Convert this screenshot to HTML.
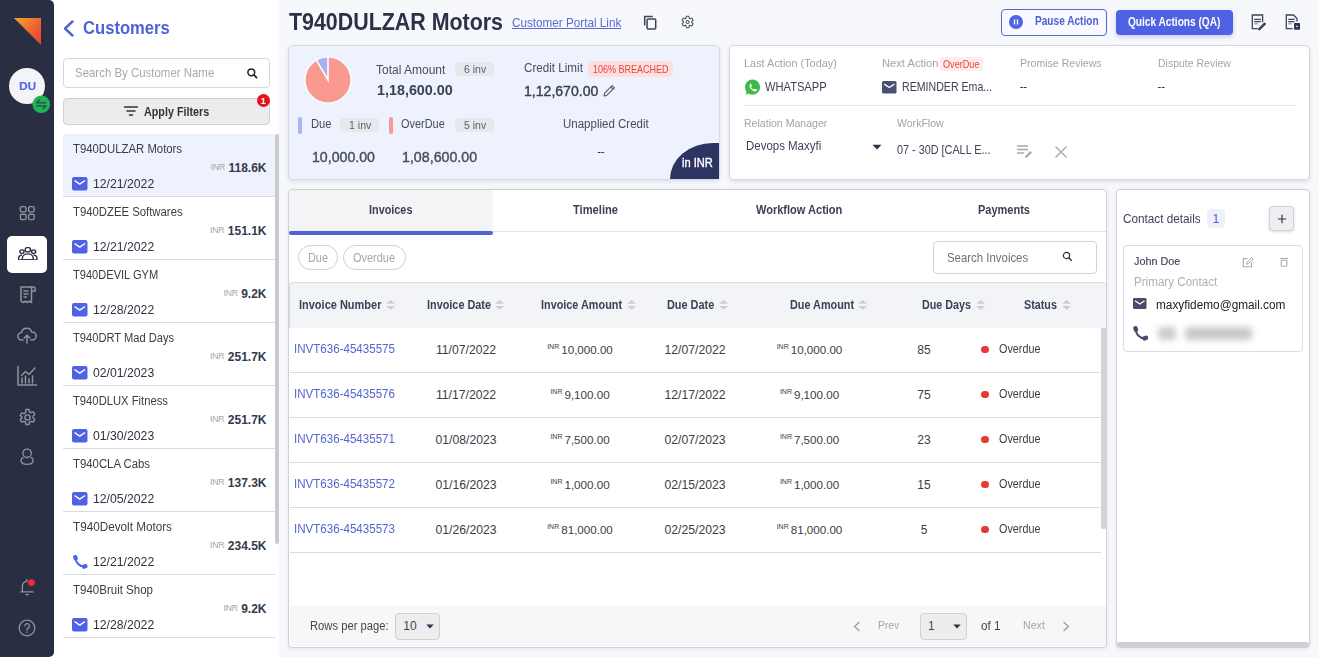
<!DOCTYPE html>
<html><head><meta charset="utf-8"><style>
html,body{margin:0;padding:0;}
body{width:1319px;height:657px;position:relative;overflow:hidden;background:#f7f8fb;font-family:"Liberation Sans", sans-serif;}
</style></head><body>
<div style="position:absolute;left:0px;top:0px;width:279px;height:657px;background:#ffffff;"></div><div style="position:absolute;left:0px;top:0px;width:54px;height:657px;background:#2a2e42;border-radius:0 5px 5px 0;"></div><svg style="position:absolute;left:0px;top:0px;" width="54" height="60" viewBox="0 0 54 60"><defs><linearGradient id="lg" x1="0" y1="0" x2="1" y2="0.8"><stop offset="0" stop-color="#f9a81f"/><stop offset="0.55" stop-color="#ef6a35"/><stop offset="1" stop-color="#e8462e"/></linearGradient></defs><polygon points="14,18 41,18 41,45" fill="url(#lg)"/></svg><div style="position:absolute;left:9px;top:68px;width:36px;height:36px;background:#f3f4f8;border-radius:50%;"></div><div style="position:absolute;left:-272.60px;width:600px;text-align:center;top:81.20px;font-size:11.8px;line-height:11.8px;font-weight:700;color:#4f62e3;white-space:nowrap;">DU</div><svg style="position:absolute;left:32px;top:95px;" width="19" height="19" viewBox="0 0 19 19"><circle cx="9.3" cy="9.2" r="8.8" fill="#1db455"/><path d="M14 7.8H4.6l3-2.9M4.6 10.8H14l-3 2.9" stroke="#34413f" stroke-width="1.2" fill="none" stroke-linecap="round" stroke-linejoin="round"/></svg><svg style="position:absolute;left:19px;top:205px;" width="18" height="17" viewBox="0 0 18 17"><g fill="none" stroke="#9092a0" stroke-width="1.4"><rect x="1.4" y="1.6" width="5.6" height="5.3" rx="1.4"/><rect x="9.6" y="1.6" width="5.6" height="5.3" rx="1.4"/><rect x="1.4" y="9.3" width="5.6" height="5.3" rx="1.4"/><rect x="9.6" y="9.3" width="5.6" height="5.3" rx="1.4"/></g></svg><div style="position:absolute;left:7px;top:236px;width:40px;height:37px;background:#ffffff;border-radius:5px;"></div><svg style="position:absolute;left:18.2px;top:246.8px" width="19.6" height="13.4" viewBox="0.4 1 19.2 15" preserveAspectRatio="none"><g fill="none" stroke="#2b2f45" stroke-width="1.4"><circle cx="10" cy="4" r="2.6"/><path d="M4.6 15.5v-1.5c0-3 2.4-5.2 5.4-5.2s5.4 2.2 5.4 5.2v1.5z"/><circle cx="4.3" cy="6.3" r="2"/><path d="M1 15.5v-1.6c0-2.2 1.3-3.8 3.4-3.8"/><circle cx="15.7" cy="6.3" r="2"/><path d="M19 15.5v-1.6c0-2.2-1.3-3.8-3.4-3.8"/><path d="M1 15.5h18"/></g></svg><svg style="position:absolute;left:18px;top:285px;" width="19" height="20" viewBox="0 0 19 20"><g fill="none" stroke="#9092a0" stroke-width="1.5" stroke-linejoin="round"><path d="M3 2h10.5v15.5l-2-1.3-2 1.3-2-1.3-2 1.3-2.5-1.3z"/><path d="M13.5 2h2a1.6 1.6 0 0 1 1.6 1.6V6h-3.6"/><path d="M5.5 6h5M5.5 9h5M5.5 12h3.5"/></g></svg><svg style="position:absolute;left:17px;top:327px;" width="20" height="17" viewBox="0 0 20 17"><g fill="none" stroke="#9092a0" stroke-width="1.5" stroke-linecap="round" stroke-linejoin="round"><path d="M6 13H4.8A3.8 3.8 0 0 1 4.6 5.4 5.2 5.2 0 0 1 14.7 5 3.9 3.9 0 0 1 15.5 13H14"/><path d="M10 16V8.5M7.2 11l2.8-2.8 2.8 2.8"/></g></svg><svg style="position:absolute;left:16px;top:365px;" width="22" height="22" viewBox="0 0 22 22"><g fill="none" stroke="#9092a0" stroke-width="1.5" stroke-linecap="round" stroke-linejoin="round"><path d="M2 1.5v18.5h18.5"/><path d="M6 18v-5M9.5 18v-7M13 18v-4M16.5 18v-7"/><path d="M5.5 10.5l4-4 3.5 3 6-6.5"/></g></svg><svg style="position:absolute;left:18px;top:408px;" width="19" height="19" viewBox="0 0 19 19"><g fill="none" stroke="#9092a0" stroke-width="1.4" stroke-linejoin="round"><path d="M8 1.5h3l.5 2.3 1.6.9 2.2-.8 1.5 2.6-1.7 1.6v1.8l1.7 1.6-1.5 2.6-2.2-.8-1.6.9-.5 2.3H8l-.5-2.3-1.6-.9-2.2.8-1.5-2.6 1.7-1.6V9.1L2.2 7.5l1.5-2.6 2.2.8 1.6-.9z"/><circle cx="9.5" cy="9.5" r="2.6"/></g></svg><svg style="position:absolute;left:18px;top:447px;" width="18" height="20" viewBox="0 0 18 20"><g fill="none" stroke="#9092a0" stroke-width="1.35"><circle cx="9.1" cy="6.3" r="4.2"/><path d="M5.4 10.3C2.2 11.6 1.4 17.3 9.1 17.3S16 11.6 12.8 10.3"/></g></svg><svg style="position:absolute;left:19px;top:576px;" width="17" height="22" viewBox="0 0 17 22"><g fill="none" stroke="#9092a0" stroke-width="1.3" stroke-linecap="round"><path d="M3.4 15.6V10.5a5 5 0 0 1 4.4-5.2V3.6"/><path d="M1.8 15.9h12.4"/><path d="M6.8 18.6h2.6"/></g><circle cx="12.4" cy="6.6" r="3.4" fill="#f02d2d"/></svg><svg style="position:absolute;left:18px;top:619px;" width="18" height="18" viewBox="0 0 18 18"><circle cx="9" cy="9" r="7.8" fill="none" stroke="#9092a0" stroke-width="1.3"/><path d="M6.8 7a2.3 2.3 0 1 1 3.2 2.1c-.7.4-1 .8-1 1.6v.5" fill="none" stroke="#9092a0" stroke-width="1.3" stroke-linecap="round"/><circle cx="9" cy="13.3" r=".8" fill="#9092a0"/></svg><svg style="position:absolute;left:61px;top:19px;" width="15" height="19" viewBox="0 0 15 19"><path d="M11.5 2.5L4 9.5l7.5 7" fill="none" stroke="#4f63d9" stroke-width="2.4" stroke-linecap="round" stroke-linejoin="round"/></svg><div style="position:absolute;left:82.80px;top:19.00px;font-size:18.5px;line-height:18.5px;font-weight:700;color:#4f63d9;white-space:nowrap;transform:scaleX(0.8978);transform-origin:0 0;">Customers</div><div style="position:absolute;left:63px;top:58px;width:207px;height:30px;box-sizing:border-box;border:1px solid #d6d8de;border-radius:4px;background:#fff;"></div><div style="position:absolute;left:74.50px;top:67.20px;font-size:12.2px;line-height:12.2px;font-weight:400;color:#a9a9ad;white-space:nowrap;transform:scaleX(0.9389);transform-origin:0 0;">Search By Customer Name</div><svg style="position:absolute;left:246px;top:67px;" width="12" height="12" viewBox="0 0 12 12"><circle cx="5.3" cy="5.3" r="3.4" fill="none" stroke="#222" stroke-width="1.5"/><path d="M7.8 7.8l2.8 2.8" stroke="#222" stroke-width="1.7" stroke-linecap="round"/></svg><div style="position:absolute;left:63px;top:98px;width:207px;height:27px;box-sizing:border-box;border:1px solid #cfd0d4;border-radius:4px;background:#ececee;"></div><svg style="position:absolute;left:123px;top:105px;" width="16" height="13" viewBox="0 0 16 13"><g stroke="#333" stroke-width="1.5" stroke-linecap="round"><path d="M1.5 2h13M4 6h8M6.5 10h3"/></g></svg><div style="position:absolute;left:144.40px;top:106.20px;font-size:12.5px;line-height:12.5px;font-weight:700;color:#333;white-space:nowrap;transform:scaleX(0.8607);transform-origin:0 0;">Apply Filters</div><div style="position:absolute;left:256.5px;top:93.7px;width:13.5px;height:13.299999999999997px;background:#e8101b;border-radius:50%;"></div><div style="position:absolute;left:-36.80px;width:600px;text-align:center;top:97.00px;font-size:9px;line-height:9px;font-weight:700;color:#fff;white-space:nowrap;">1</div><div style="position:absolute;left:63px;top:134px;width:212px;height:63px;box-sizing:border-box;background:#eef2fc;border-bottom:1px solid #d9dadf;"></div><div style="position:absolute;left:72.80px;top:142.70px;font-size:12px;line-height:12px;font-weight:400;color:#3b3d45;white-space:nowrap;transform:scaleX(0.9452);transform-origin:0 0;">T940DULZAR Motors</div><div style="position:absolute;right:1052.50px;top:161.90px;font-size:12px;line-height:12px;font-weight:700;color:#333a4d;white-space:nowrap;"><span style="font-size:8.6px;color:#a3a3a8;font-weight:400;margin-right:3.5px;position:relative;top:-2px;letter-spacing:-0.2px">INR</span>118.6K</div><svg style="position:absolute;left:72px;top:177px;" width="16" height="14" viewBox="0 0 16 14"><rect x="0" y="0" width="15.5" height="13.5" rx="2" fill="#4f62e3"/><path d="M2.5 3.5l5.25 3.6 5.25-3.6" fill="none" stroke="#fff" stroke-width="1.5" stroke-linejoin="round"/></svg><div style="position:absolute;left:93.40px;top:178.30px;font-size:12.6px;line-height:12.6px;font-weight:400;color:#2f3140;white-space:nowrap;transform:scaleX(0.9714);transform-origin:0 0;">12/21/2022</div><div style="position:absolute;left:63px;top:197px;width:212px;height:63px;box-sizing:border-box;background:#fff;border-bottom:1px solid #d9dadf;"></div><div style="position:absolute;left:72.80px;top:205.70px;font-size:12px;line-height:12px;font-weight:400;color:#3b3d45;white-space:nowrap;transform:scaleX(0.9445);transform-origin:0 0;">T940DZEE Softwares</div><div style="position:absolute;right:1052.50px;top:224.90px;font-size:12px;line-height:12px;font-weight:700;color:#333a4d;white-space:nowrap;"><span style="font-size:8.6px;color:#a3a3a8;font-weight:400;margin-right:3.5px;position:relative;top:-2px;letter-spacing:-0.2px">INR</span>151.1K</div><svg style="position:absolute;left:72px;top:240px;" width="16" height="14" viewBox="0 0 16 14"><rect x="0" y="0" width="15.5" height="13.5" rx="2" fill="#4f62e3"/><path d="M2.5 3.5l5.25 3.6 5.25-3.6" fill="none" stroke="#fff" stroke-width="1.5" stroke-linejoin="round"/></svg><div style="position:absolute;left:93.40px;top:241.30px;font-size:12.6px;line-height:12.6px;font-weight:400;color:#2f3140;white-space:nowrap;transform:scaleX(0.9714);transform-origin:0 0;">12/21/2022</div><div style="position:absolute;left:63px;top:260px;width:212px;height:63px;box-sizing:border-box;background:#fff;border-bottom:1px solid #d9dadf;"></div><div style="position:absolute;left:72.80px;top:268.70px;font-size:12px;line-height:12px;font-weight:400;color:#3b3d45;white-space:nowrap;transform:scaleX(0.9233);transform-origin:0 0;">T940DEVIL GYM</div><div style="position:absolute;right:1052.50px;top:287.90px;font-size:12px;line-height:12px;font-weight:700;color:#333a4d;white-space:nowrap;"><span style="font-size:8.6px;color:#a3a3a8;font-weight:400;margin-right:3.5px;position:relative;top:-2px;letter-spacing:-0.2px">INR</span>9.2K</div><svg style="position:absolute;left:72px;top:303px;" width="16" height="14" viewBox="0 0 16 14"><rect x="0" y="0" width="15.5" height="13.5" rx="2" fill="#4f62e3"/><path d="M2.5 3.5l5.25 3.6 5.25-3.6" fill="none" stroke="#fff" stroke-width="1.5" stroke-linejoin="round"/></svg><div style="position:absolute;left:93.40px;top:304.30px;font-size:12.6px;line-height:12.6px;font-weight:400;color:#2f3140;white-space:nowrap;transform:scaleX(0.9714);transform-origin:0 0;">12/28/2022</div><div style="position:absolute;left:63px;top:323px;width:212px;height:63px;box-sizing:border-box;background:#fff;border-bottom:1px solid #d9dadf;"></div><div style="position:absolute;left:72.80px;top:331.70px;font-size:12px;line-height:12px;font-weight:400;color:#3b3d45;white-space:nowrap;transform:scaleX(0.9288);transform-origin:0 0;">T940DRT Mad Days</div><div style="position:absolute;right:1052.50px;top:350.90px;font-size:12px;line-height:12px;font-weight:700;color:#333a4d;white-space:nowrap;"><span style="font-size:8.6px;color:#a3a3a8;font-weight:400;margin-right:3.5px;position:relative;top:-2px;letter-spacing:-0.2px">INR</span>251.7K</div><svg style="position:absolute;left:72px;top:366px;" width="16" height="14" viewBox="0 0 16 14"><rect x="0" y="0" width="15.5" height="13.5" rx="2" fill="#4f62e3"/><path d="M2.5 3.5l5.25 3.6 5.25-3.6" fill="none" stroke="#fff" stroke-width="1.5" stroke-linejoin="round"/></svg><div style="position:absolute;left:93.40px;top:367.30px;font-size:12.6px;line-height:12.6px;font-weight:400;color:#2f3140;white-space:nowrap;transform:scaleX(0.9714);transform-origin:0 0;">02/01/2023</div><div style="position:absolute;left:63px;top:386px;width:212px;height:63px;box-sizing:border-box;background:#fff;border-bottom:1px solid #d9dadf;"></div><div style="position:absolute;left:72.80px;top:394.70px;font-size:12px;line-height:12px;font-weight:400;color:#3b3d45;white-space:nowrap;transform:scaleX(0.9369);transform-origin:0 0;">T940DLUX Fitness</div><div style="position:absolute;right:1052.50px;top:413.90px;font-size:12px;line-height:12px;font-weight:700;color:#333a4d;white-space:nowrap;"><span style="font-size:8.6px;color:#a3a3a8;font-weight:400;margin-right:3.5px;position:relative;top:-2px;letter-spacing:-0.2px">INR</span>251.7K</div><svg style="position:absolute;left:72px;top:429px;" width="16" height="14" viewBox="0 0 16 14"><rect x="0" y="0" width="15.5" height="13.5" rx="2" fill="#4f62e3"/><path d="M2.5 3.5l5.25 3.6 5.25-3.6" fill="none" stroke="#fff" stroke-width="1.5" stroke-linejoin="round"/></svg><div style="position:absolute;left:93.40px;top:430.30px;font-size:12.6px;line-height:12.6px;font-weight:400;color:#2f3140;white-space:nowrap;transform:scaleX(0.9714);transform-origin:0 0;">01/30/2023</div><div style="position:absolute;left:63px;top:449px;width:212px;height:63px;box-sizing:border-box;background:#fff;border-bottom:1px solid #d9dadf;"></div><div style="position:absolute;left:72.80px;top:457.70px;font-size:12px;line-height:12px;font-weight:400;color:#3b3d45;white-space:nowrap;transform:scaleX(0.9464);transform-origin:0 0;">T940CLA Cabs</div><div style="position:absolute;right:1052.50px;top:476.90px;font-size:12px;line-height:12px;font-weight:700;color:#333a4d;white-space:nowrap;"><span style="font-size:8.6px;color:#a3a3a8;font-weight:400;margin-right:3.5px;position:relative;top:-2px;letter-spacing:-0.2px">INR</span>137.3K</div><svg style="position:absolute;left:72px;top:492px;" width="16" height="14" viewBox="0 0 16 14"><rect x="0" y="0" width="15.5" height="13.5" rx="2" fill="#4f62e3"/><path d="M2.5 3.5l5.25 3.6 5.25-3.6" fill="none" stroke="#fff" stroke-width="1.5" stroke-linejoin="round"/></svg><div style="position:absolute;left:93.40px;top:493.30px;font-size:12.6px;line-height:12.6px;font-weight:400;color:#2f3140;white-space:nowrap;transform:scaleX(0.9714);transform-origin:0 0;">12/05/2022</div><div style="position:absolute;left:63px;top:512px;width:212px;height:63px;box-sizing:border-box;background:#fff;border-bottom:1px solid #d9dadf;"></div><div style="position:absolute;left:72.80px;top:520.70px;font-size:12px;line-height:12px;font-weight:400;color:#3b3d45;white-space:nowrap;transform:scaleX(0.9763);transform-origin:0 0;">T940Devolt Motors</div><div style="position:absolute;right:1052.50px;top:539.90px;font-size:12px;line-height:12px;font-weight:700;color:#333a4d;white-space:nowrap;"><span style="font-size:8.6px;color:#a3a3a8;font-weight:400;margin-right:3.5px;position:relative;top:-2px;letter-spacing:-0.2px">INR</span>234.5K</div><svg style="position:absolute;left:72px;top:554px;" width="16" height="16" viewBox="0 0 16 16"><g fill="#4f62e3"><path d="M3.6 4.5C4 9 7.5 12.2 11.6 12.6" fill="none" stroke="#4f62e3" stroke-width="2"/><rect x="1.4" y="1" width="4.2" height="5.6" rx="1.9" transform="rotate(-20 3.5 3.8)"/><rect x="9.9" y="10.3" width="5.6" height="4.2" rx="1.9" transform="rotate(-20 12.7 12.4)"/></g></svg><div style="position:absolute;left:93.40px;top:556.30px;font-size:12.6px;line-height:12.6px;font-weight:400;color:#2f3140;white-space:nowrap;transform:scaleX(0.9714);transform-origin:0 0;">12/21/2022</div><div style="position:absolute;left:63px;top:575px;width:212px;height:63px;box-sizing:border-box;background:#fff;border-bottom:1px solid #d9dadf;"></div><div style="position:absolute;left:72.80px;top:583.70px;font-size:12px;line-height:12px;font-weight:400;color:#3b3d45;white-space:nowrap;transform:scaleX(0.9592);transform-origin:0 0;">T940Bruit Shop</div><div style="position:absolute;right:1052.50px;top:602.90px;font-size:12px;line-height:12px;font-weight:700;color:#333a4d;white-space:nowrap;"><span style="font-size:8.6px;color:#a3a3a8;font-weight:400;margin-right:3.5px;position:relative;top:-2px;letter-spacing:-0.2px">INR</span>9.2K</div><svg style="position:absolute;left:72px;top:618px;" width="16" height="14" viewBox="0 0 16 14"><rect x="0" y="0" width="15.5" height="13.5" rx="2" fill="#4f62e3"/><path d="M2.5 3.5l5.25 3.6 5.25-3.6" fill="none" stroke="#fff" stroke-width="1.5" stroke-linejoin="round"/></svg><div style="position:absolute;left:93.40px;top:619.30px;font-size:12.6px;line-height:12.6px;font-weight:400;color:#2f3140;white-space:nowrap;transform:scaleX(0.9714);transform-origin:0 0;">12/28/2022</div><div style="position:absolute;left:275px;top:134px;width:4px;height:410px;background:#c9cacd;border-radius:2px;"></div><div style="position:absolute;left:289.00px;top:10.60px;font-size:23px;line-height:23px;font-weight:700;color:#2b3149;white-space:nowrap;transform:scaleX(0.9304);transform-origin:0 0;">T940DULZAR Motors</div><div style="position:absolute;left:512.40px;top:17.00px;font-size:12.5px;line-height:12.5px;font-weight:400;color:#5a6ad6;white-space:nowrap;transform:scaleX(0.9360);transform-origin:0 0;text-decoration:underline;text-underline-offset:1px;">Customer Portal Link</div><svg style="position:absolute;left:642px;top:14px;" width="16" height="17" viewBox="0 0 16 17"><g fill="none" stroke="#3d4358" stroke-width="1.5"><path d="M2.7 11.6V2.6h8.1"/><rect x="5.1" y="4.9" width="8.6" height="10.1" rx="1"/></g></svg><svg style="position:absolute;left:681px;top:15px;" width="14" height="14" viewBox="0 0 14 14"><g fill="none" stroke="#4a4f60" stroke-width="1.05" stroke-linejoin="round"><path d="M4.97 3.24 L5.33 1.34 L7.87 1.34 L8.23 3.24 L9.04 3.71 L10.87 3.07 L12.13 5.27 L10.67 6.53 L10.67 7.47 L12.13 8.73 L10.87 10.93 L9.04 10.29 L8.23 10.76 L7.87 12.66 L5.33 12.66 L4.97 10.76 L4.16 10.29 L2.33 10.93 L1.07 8.73 L2.53 7.47 L2.53 6.53 L1.07 5.27 L2.33 3.07 L4.16 3.71Z"/><circle cx="6.6" cy="7" r="1.5"/></g></svg><div style="position:absolute;left:1001px;top:9px;width:106px;height:27px;box-sizing:border-box;border:1px solid #5566cf;border-radius:4px;background:#f9faff;"></div><svg style="position:absolute;left:1009px;top:14.7px;" width="14" height="14" viewBox="0 0 14 14"><circle cx="7" cy="7" r="7" fill="#4f62e3"/><path d="M5.5 4.5v5M8.5 4.5v5" stroke="#fff" stroke-width="1.4"/></svg><div style="position:absolute;left:1034.70px;top:14.80px;font-size:12px;line-height:12px;font-weight:700;color:#4f5fd0;white-space:nowrap;transform:scaleX(0.8413);transform-origin:0 0;">Pause Action</div><div style="position:absolute;left:1116px;top:10px;width:117px;height:25px;border-radius:4px;background:#4f62e3;box-shadow:0 2px 4px rgba(79,98,227,0.3);"></div><div style="position:absolute;left:1128.00px;top:15.50px;font-size:12px;line-height:12px;font-weight:700;color:#ffffff;white-space:nowrap;transform:scaleX(0.8434);transform-origin:0 0;">Quick Actions (QA)</div><svg style="position:absolute;left:1250px;top:13px;" width="18" height="18" viewBox="0 0 18 18"><g fill="none" stroke="#3d4358" stroke-width="1.3"><path d="M12.6 9.3V2H2.3v13.6h5.4"/><path d="M4.2 6.4h6.6M4.2 8.6h6.6"/><path d="M4.2 10.8h3.8" stroke="#9a9dab"/></g><path d="M9.3 16.2L14.6 10.9" stroke="#3d4358" stroke-width="2.6" stroke-linecap="round"/></svg><svg style="position:absolute;left:1284px;top:13px;" width="18" height="18" viewBox="0 0 18 18"><g fill="none" stroke="#3d4358" stroke-width="1.3"><path d="M8.6 15.6H2.3V2h7.2l3.5 3.6v3"/><path d="M4.2 6.4h6.4M4.2 8.6h6.4"/><path d="M4.2 10.8h3.8" stroke="#9a9dab"/></g><rect x="10.1" y="10.1" width="5.9" height="6.7" rx="0.6" fill="#2b3158"/><path d="M12 13.4h2" stroke="#c9cbe0" stroke-width="1.2"/></svg><div style="position:absolute;left:288px;top:45px;width:432px;height:135px;box-sizing:border-box;background:#eef2fd;border:1px solid #d3d8e4;border-radius:5px;box-shadow:0 2px 4px rgba(20,30,60,0.10);overflow:hidden;"></div><svg style="position:absolute;left:302.6px;top:54.599999999999994px;" width="50" height="50" viewBox="0 0 50 50"><circle cx="25" cy="25" r="23" fill="#f9998f"/><path d="M25 25 L25 2 A23 23 0 0 0 13.38 5.15 Z" fill="#a6b0f2"/><path d="M25 1V25L12.80 4.16" fill="none" stroke="#fff" stroke-width="1.6"/><circle cx="25" cy="25" r="23" fill="none" stroke="#fff" stroke-width="1.2"/></svg><div style="position:absolute;left:376.30px;top:63.80px;font-size:12.5px;line-height:12.5px;font-weight:400;color:#474d63;white-space:nowrap;transform:scaleX(0.9592);transform-origin:0 0;">Total Amount</div><div style="position:absolute;left:455px;top:62px;width:39px;height:14px;background:#e8e8ec;border-radius:4px;"></div><div style="position:absolute;left:463.50px;top:64.20px;font-size:11.5px;line-height:11.5px;font-weight:400;color:#5a5d68;white-space:nowrap;transform:scaleX(0.9149);transform-origin:0 0;">6 inv</div><div style="position:absolute;left:376.60px;top:83.20px;font-size:14px;line-height:14px;font-weight:700;color:#3a4058;white-space:nowrap;transform:scaleX(1.0241);transform-origin:0 0;">1,18,600.00</div><div style="position:absolute;left:523.80px;top:62.00px;font-size:12.5px;line-height:12.5px;font-weight:400;color:#474d63;white-space:nowrap;transform:scaleX(0.9312);transform-origin:0 0;">Credit Limit</div><div style="position:absolute;left:588px;top:61px;width:85px;height:16px;background:#fddfde;border-radius:4px;"></div><div style="position:absolute;left:592.50px;top:63.60px;font-size:10.5px;line-height:10.5px;font-weight:400;color:#e8453c;white-space:nowrap;transform:scaleX(0.8570);transform-origin:0 0;">106% BREACHED</div><div style="position:absolute;left:524.00px;top:84.00px;font-size:14px;line-height:14px;font-weight:400;color:#3a4058;white-space:nowrap;transform:scaleX(1.0051);transform-origin:0 0;-webkit-text-stroke:0.4px #3a4058;">1,12,670.00</div><svg style="position:absolute;left:602px;top:84px;" width="14" height="14" viewBox="0 0 14 14"><g fill="none" stroke="#555a6e" stroke-width="1.1" stroke-linejoin="round"><path d="M2 12l.6-2.8 7.6-7.6 2.2 2.2-7.6 7.6z"/><path d="M8.8 3l2.2 2.2"/></g></svg><div style="position:absolute;left:298px;top:117px;width:4px;height:17px;background:#a9b5f0;border-radius:2px;"></div><div style="position:absolute;left:310.70px;top:118.30px;font-size:12.5px;line-height:12.5px;font-weight:400;color:#474d63;white-space:nowrap;transform:scaleX(0.8962);transform-origin:0 0;">Due</div><div style="position:absolute;left:340px;top:118px;width:39px;height:14px;background:#e8e8ec;border-radius:4px;"></div><div style="position:absolute;left:348.50px;top:119.60px;font-size:11.5px;line-height:11.5px;font-weight:400;color:#5a5d68;white-space:nowrap;transform:scaleX(0.9190);transform-origin:0 0;">1 inv</div><div style="position:absolute;left:389px;top:117px;width:4px;height:17px;background:#f79a92;border-radius:2px;"></div><div style="position:absolute;left:401.10px;top:118.30px;font-size:12.5px;line-height:12.5px;font-weight:400;color:#474d63;white-space:nowrap;transform:scaleX(0.8740);transform-origin:0 0;">OverDue</div><div style="position:absolute;left:455px;top:118px;width:39px;height:14px;background:#e8e8ec;border-radius:4px;"></div><div style="position:absolute;left:463.50px;top:120.00px;font-size:11.5px;line-height:11.5px;font-weight:400;color:#5a5d68;white-space:nowrap;transform:scaleX(0.9149);transform-origin:0 0;">5 inv</div><div style="position:absolute;left:312.40px;top:150.10px;font-size:14px;line-height:14px;font-weight:400;color:#474d63;white-space:nowrap;transform:scaleX(1.0112);transform-origin:0 0;-webkit-text-stroke:0.4px #474d63;">10,000.00</div><div style="position:absolute;left:402.10px;top:150.10px;font-size:14px;line-height:14px;font-weight:400;color:#474d63;white-space:nowrap;transform:scaleX(1.0160);transform-origin:0 0;-webkit-text-stroke:0.4px #474d63;">1,08,600.00</div><div style="position:absolute;left:563.30px;top:118.40px;font-size:12.5px;line-height:12.5px;font-weight:400;color:#474d63;white-space:nowrap;transform:scaleX(0.9203);transform-origin:0 0;">Unapplied Credit</div><div style="position:absolute;left:300.80px;width:600px;text-align:center;top:146.00px;font-size:11px;line-height:11px;font-weight:400;color:#222;white-space:nowrap;">--</div><div style="position:absolute;left:670px;top:143px;width:49px;height:36px;background:#2e3461;border-radius:50px 0 0 0 / 42px 0 0 0;"></div><div style="position:absolute;left:682.00px;top:156.20px;font-size:13px;line-height:13px;font-weight:400;color:#ffffff;white-space:nowrap;transform:scaleX(0.8550);transform-origin:0 0;-webkit-text-stroke:0.4px #ffffff;">in INR</div><div style="position:absolute;left:729px;top:45px;width:581px;height:135px;box-sizing:border-box;background:#fff;border:1px solid #d6d8df;border-radius:5px;box-shadow:0 2px 4px rgba(20,30,60,0.12);"></div><div style="position:absolute;left:744.00px;top:58.40px;font-size:11.5px;line-height:11.5px;font-weight:400;color:#a3a4ab;white-space:nowrap;transform:scaleX(0.9504);transform-origin:0 0;">Last Action (Today)</div><div style="position:absolute;left:881.60px;top:58.40px;font-size:11.5px;line-height:11.5px;font-weight:400;color:#a3a4ab;white-space:nowrap;transform:scaleX(0.9710);transform-origin:0 0;">Next Action</div><div style="position:absolute;left:940px;top:57px;width:43px;height:14px;background:#fdeceb;border-radius:3px;"></div><div style="position:absolute;left:943.30px;top:59.60px;font-size:10.2px;line-height:10.2px;font-weight:400;color:#e8453c;white-space:nowrap;transform:scaleX(0.8946);transform-origin:0 0;">OverDue</div><div style="position:absolute;left:1019.70px;top:58.40px;font-size:11.5px;line-height:11.5px;font-weight:400;color:#a3a4ab;white-space:nowrap;transform:scaleX(0.9180);transform-origin:0 0;">Promise Reviews</div><div style="position:absolute;left:1157.60px;top:58.40px;font-size:11.5px;line-height:11.5px;font-weight:400;color:#a3a4ab;white-space:nowrap;transform:scaleX(0.9121);transform-origin:0 0;">Dispute Review</div><svg style="position:absolute;left:743.5px;top:78.8px;" width="17" height="17" viewBox="0 0 17 17"><circle cx="8.5" cy="8.2" r="7.6" fill="#3dbb4a"/><path d="M1.5 16l1.3-3.8 2.3 2z" fill="#3dbb4a"/><path d="M5.9 4.6c.4-.3.9-.2 1.1.2l.8 1.8c.1.3 0 .6-.2.8l-.6.6c.5 1.1 1.4 2 2.5 2.5l.6-.6c.2-.2.5-.3.8-.2l1.8.8c.4.2.5.7.2 1.1-.6.8-1.5 1.2-2.4.9-2.3-.7-4.2-2.6-4.9-4.9-.3-.9.1-1.8.9-2.4z" fill="#fff"/></svg><div style="position:absolute;left:764.50px;top:81.00px;font-size:12.2px;line-height:12.2px;font-weight:400;color:#3d4358;white-space:nowrap;transform:scaleX(0.9129);transform-origin:0 0;">WHATSAPP</div><svg style="position:absolute;left:882px;top:80.6px;" width="15" height="13" viewBox="0 0 15 13"><rect x="0" y="0" width="14.5" height="12.5" rx="1.5" fill="#4a5070"/><path d="M2.3 3.2l5 3.3 5-3.3" fill="none" stroke="#fff" stroke-width="1.4" stroke-linejoin="round"/></svg><div style="position:absolute;left:901.50px;top:81.00px;font-size:12.2px;line-height:12.2px;font-weight:400;color:#3d4358;white-space:nowrap;transform:scaleX(0.8698);transform-origin:0 0;">REMINDER Ema...</div><div style="position:absolute;left:1019.70px;top:81.00px;font-size:11px;line-height:11px;font-weight:400;color:#222;white-space:nowrap;">--</div><div style="position:absolute;left:1157.60px;top:81.00px;font-size:11px;line-height:11px;font-weight:400;color:#222;white-space:nowrap;">--</div><div style="position:absolute;left:744px;top:105px;width:552px;height:1px;background:#e6e7eb;"></div><div style="position:absolute;left:744.00px;top:118.20px;font-size:11.5px;line-height:11.5px;font-weight:400;color:#a3a4ab;white-space:nowrap;transform:scaleX(0.9181);transform-origin:0 0;">Relation Manager</div><div style="position:absolute;left:897.00px;top:118.20px;font-size:11.5px;line-height:11.5px;font-weight:400;color:#a3a4ab;white-space:nowrap;transform:scaleX(0.9167);transform-origin:0 0;">WorkFlow</div><div style="position:absolute;left:745.80px;top:140.00px;font-size:12.5px;line-height:12.5px;font-weight:400;color:#3d4358;white-space:nowrap;transform:scaleX(0.9171);transform-origin:0 0;">Devops Maxyfi</div><svg style="position:absolute;left:872px;top:144px;" width="10" height="6" viewBox="0 0 10 6"><path d="M0.5 0.8h9L5 5.5z" fill="#2b3149"/></svg><div style="position:absolute;left:897.00px;top:144.20px;font-size:12.5px;line-height:12.5px;font-weight:400;color:#3d4358;white-space:nowrap;transform:scaleX(0.8667);transform-origin:0 0;">07 - 30D [CALL E...</div><svg style="position:absolute;left:1016px;top:143px;" width="18" height="17" viewBox="0 0 18 17"><g fill="none" stroke="#a6a7ad" stroke-width="1.4" stroke-linecap="round"><path d="M1.5 3h10M1.5 6.5h10M1.5 10h6"/></g><path d="M9 15l.4-2 5-5 1.6 1.6-5 5z" fill="#a6a7ad"/></svg><svg style="position:absolute;left:1054px;top:145px;" width="14" height="14" viewBox="0 0 14 14"><path d="M2 2l10 10M12 2L2 12" stroke="#a6a7ad" stroke-width="1.4" stroke-linecap="round"/></svg><div style="position:absolute;left:288px;top:189px;width:819px;height:459px;box-sizing:border-box;background:#fff;border:1px solid #cfd1d7;border-radius:4px;overflow:hidden;box-shadow:0 1px 4px rgba(30,40,80,0.08);"></div><div style="position:absolute;left:289px;top:190px;width:204px;height:41px;background:#f4f4f6;border-radius:4px 0 0 0;"></div><div style="position:absolute;left:289px;top:231px;width:817px;height:1px;background:#e3e4e8;"></div><div style="position:absolute;left:289px;top:231px;width:204px;height:4px;background:#4f62d9;border-radius:2px;"></div><div style="position:absolute;left:369.20px;top:204.20px;font-size:12px;line-height:12px;font-weight:700;color:#3b4157;white-space:nowrap;transform:scaleX(0.9042);transform-origin:0 0;">Invoices</div><div style="position:absolute;left:572.90px;top:204.20px;font-size:12px;line-height:12px;font-weight:700;color:#3b4157;white-space:nowrap;transform:scaleX(0.9282);transform-origin:0 0;">Timeline</div><div style="position:absolute;left:756.40px;top:204.20px;font-size:12px;line-height:12px;font-weight:700;color:#3b4157;white-space:nowrap;transform:scaleX(0.9185);transform-origin:0 0;">Workflow Action</div><div style="position:absolute;left:977.70px;top:204.20px;font-size:12px;line-height:12px;font-weight:700;color:#3b4157;white-space:nowrap;transform:scaleX(0.9163);transform-origin:0 0;">Payments</div><div style="position:absolute;left:298px;top:245px;width:40px;height:25px;box-sizing:border-box;border:1px solid #cfd0d4;border-radius:13px;"></div><div style="position:absolute;left:308.40px;top:251.50px;font-size:12.2px;line-height:12.2px;font-weight:400;color:#a5a6ab;white-space:nowrap;transform:scaleX(0.8913);transform-origin:0 0;">Due</div><div style="position:absolute;left:343px;top:245px;width:63px;height:25px;box-sizing:border-box;border:1px solid #cfd0d4;border-radius:13px;"></div><div style="position:absolute;left:353.40px;top:251.50px;font-size:12.2px;line-height:12.2px;font-weight:400;color:#a5a6ab;white-space:nowrap;transform:scaleX(0.8987);transform-origin:0 0;">Overdue</div><div style="position:absolute;left:933px;top:241px;width:164px;height:33px;box-sizing:border-box;border:1px solid #d3d4d9;border-radius:4px;"></div><div style="position:absolute;left:946.80px;top:252.20px;font-size:12.2px;line-height:12.2px;font-weight:400;color:#6f7079;white-space:nowrap;transform:scaleX(0.9361);transform-origin:0 0;">Search Invoices</div><svg style="position:absolute;left:1062px;top:251px;" width="11" height="11" viewBox="0 0 11 11"><circle cx="4.5" cy="4.5" r="3.1" fill="none" stroke="#333" stroke-width="1.2"/><path d="M6.8 6.8l2.5 2.5" stroke="#333" stroke-width="1.4" stroke-linecap="round"/></svg><div style="position:absolute;left:289px;top:282px;width:817px;height:46px;box-sizing:border-box;background:#f3f4f7;border-top:1px solid #d9dbe1;border-left:1px solid #d9dbe1;border-radius:4px 4px 0 0;"></div><div style="position:absolute;left:299.00px;top:299.20px;font-size:12.5px;line-height:12.5px;font-weight:700;color:#3b4157;white-space:nowrap;transform:scaleX(0.8789);transform-origin:0 0;">Invoice Number</div><svg style="position:absolute;left:386px;top:299px;" width="10" height="12" viewBox="0 0 10 12"><path d="M4.7 1L9.2 4.8H0.2z M4.7 10.8L9.2 7H0.2z" fill="#cdced3"/></svg><div style="position:absolute;left:426.50px;top:299.20px;font-size:12.5px;line-height:12.5px;font-weight:700;color:#3b4157;white-space:nowrap;transform:scaleX(0.8693);transform-origin:0 0;">Invoice Date</div><svg style="position:absolute;left:494.5px;top:299px;" width="10" height="12" viewBox="0 0 10 12"><path d="M4.7 1L9.2 4.8H0.2z M4.7 10.8L9.2 7H0.2z" fill="#cdced3"/></svg><div style="position:absolute;left:540.50px;top:299.20px;font-size:12.5px;line-height:12.5px;font-weight:700;color:#3b4157;white-space:nowrap;transform:scaleX(0.8686);transform-origin:0 0;">Invoice Amount</div><svg style="position:absolute;left:627px;top:299px;" width="10" height="12" viewBox="0 0 10 12"><path d="M4.7 1L9.2 4.8H0.2z M4.7 10.8L9.2 7H0.2z" fill="#cdced3"/></svg><div style="position:absolute;left:667.40px;top:299.20px;font-size:12.5px;line-height:12.5px;font-weight:700;color:#3b4157;white-space:nowrap;transform:scaleX(0.8721);transform-origin:0 0;">Due Date</div><svg style="position:absolute;left:718.5px;top:299px;" width="10" height="12" viewBox="0 0 10 12"><path d="M4.7 1L9.2 4.8H0.2z M4.7 10.8L9.2 7H0.2z" fill="#cdced3"/></svg><div style="position:absolute;left:790.20px;top:299.20px;font-size:12.5px;line-height:12.5px;font-weight:700;color:#3b4157;white-space:nowrap;transform:scaleX(0.8677);transform-origin:0 0;">Due Amount</div><svg style="position:absolute;left:857.5px;top:299px;" width="10" height="12" viewBox="0 0 10 12"><path d="M4.7 1L9.2 4.8H0.2z M4.7 10.8L9.2 7H0.2z" fill="#cdced3"/></svg><div style="position:absolute;left:922.40px;top:299.20px;font-size:12.5px;line-height:12.5px;font-weight:700;color:#3b4157;white-space:nowrap;transform:scaleX(0.8579);transform-origin:0 0;">Due Days</div><svg style="position:absolute;left:975.5px;top:299px;" width="10" height="12" viewBox="0 0 10 12"><path d="M4.7 1L9.2 4.8H0.2z M4.7 10.8L9.2 7H0.2z" fill="#cdced3"/></svg><div style="position:absolute;left:1023.70px;top:299.20px;font-size:12.5px;line-height:12.5px;font-weight:700;color:#3b4157;white-space:nowrap;transform:scaleX(0.8627);transform-origin:0 0;">Status</div><svg style="position:absolute;left:1061.5px;top:299px;" width="10" height="12" viewBox="0 0 10 12"><path d="M4.7 1L9.2 4.8H0.2z M4.7 10.8L9.2 7H0.2z" fill="#cdced3"/></svg><div style="position:absolute;left:290px;top:372px;width:811px;height:1px;background:#d9dadf;"></div><div style="position:absolute;left:294.00px;top:342.90px;font-size:12.5px;line-height:12.5px;font-weight:400;color:#5566cc;white-space:nowrap;transform:scaleX(0.9255);transform-origin:0 0;">INVT636-45435575</div><div style="position:absolute;left:166.00px;width:600px;text-align:center;top:344.30px;font-size:12.2px;line-height:12.2px;font-weight:400;color:#3b3d45;white-space:nowrap;">11/07/2022</div><div style="position:absolute;left:280.00px;width:600px;text-align:center;top:343.50px;font-size:11.6px;line-height:11.6px;font-weight:400;color:#3b3d45;white-space:nowrap;"><span style="font-size:7px;position:relative;top:-5px;margin-right:2px">INR</span>10,000.00</div><div style="position:absolute;left:395.00px;width:600px;text-align:center;top:344.30px;font-size:12.2px;line-height:12.2px;font-weight:400;color:#3b3d45;white-space:nowrap;">12/07/2022</div><div style="position:absolute;left:509.50px;width:600px;text-align:center;top:343.50px;font-size:11.6px;line-height:11.6px;font-weight:400;color:#3b3d45;white-space:nowrap;"><span style="font-size:7px;position:relative;top:-5px;margin-right:2px">INR</span>10,000.00</div><div style="position:absolute;left:624.00px;width:600px;text-align:center;top:344.30px;font-size:12px;line-height:12px;font-weight:400;color:#3b3d45;white-space:nowrap;">85</div><div style="position:absolute;left:981.4px;top:345.6px;width:7.399999999999977px;height:7.399999999999977px;background:#e53935;border-radius:50%;"></div><div style="position:absolute;left:998.50px;top:342.70px;font-size:12.2px;line-height:12.2px;font-weight:400;color:#3b3d45;white-space:nowrap;transform:scaleX(0.8858);transform-origin:0 0;">Overdue</div><div style="position:absolute;left:290px;top:417px;width:811px;height:1px;background:#d9dadf;"></div><div style="position:absolute;left:294.00px;top:387.90px;font-size:12.5px;line-height:12.5px;font-weight:400;color:#5566cc;white-space:nowrap;transform:scaleX(0.9255);transform-origin:0 0;">INVT636-45435576</div><div style="position:absolute;left:166.00px;width:600px;text-align:center;top:389.30px;font-size:12.2px;line-height:12.2px;font-weight:400;color:#3b3d45;white-space:nowrap;">11/17/2022</div><div style="position:absolute;left:280.00px;width:600px;text-align:center;top:388.50px;font-size:11.6px;line-height:11.6px;font-weight:400;color:#3b3d45;white-space:nowrap;"><span style="font-size:7px;position:relative;top:-5px;margin-right:2px">INR</span>9,100.00</div><div style="position:absolute;left:395.00px;width:600px;text-align:center;top:389.30px;font-size:12.2px;line-height:12.2px;font-weight:400;color:#3b3d45;white-space:nowrap;">12/17/2022</div><div style="position:absolute;left:509.50px;width:600px;text-align:center;top:388.50px;font-size:11.6px;line-height:11.6px;font-weight:400;color:#3b3d45;white-space:nowrap;"><span style="font-size:7px;position:relative;top:-5px;margin-right:2px">INR</span>9,100.00</div><div style="position:absolute;left:624.00px;width:600px;text-align:center;top:389.30px;font-size:12px;line-height:12px;font-weight:400;color:#3b3d45;white-space:nowrap;">75</div><div style="position:absolute;left:981.4px;top:390.6px;width:7.399999999999977px;height:7.399999999999977px;background:#e53935;border-radius:50%;"></div><div style="position:absolute;left:998.50px;top:387.70px;font-size:12.2px;line-height:12.2px;font-weight:400;color:#3b3d45;white-space:nowrap;transform:scaleX(0.8858);transform-origin:0 0;">Overdue</div><div style="position:absolute;left:290px;top:462px;width:811px;height:1px;background:#d9dadf;"></div><div style="position:absolute;left:294.00px;top:432.90px;font-size:12.5px;line-height:12.5px;font-weight:400;color:#5566cc;white-space:nowrap;transform:scaleX(0.9255);transform-origin:0 0;">INVT636-45435571</div><div style="position:absolute;left:166.00px;width:600px;text-align:center;top:434.30px;font-size:12.2px;line-height:12.2px;font-weight:400;color:#3b3d45;white-space:nowrap;">01/08/2023</div><div style="position:absolute;left:280.00px;width:600px;text-align:center;top:433.50px;font-size:11.6px;line-height:11.6px;font-weight:400;color:#3b3d45;white-space:nowrap;"><span style="font-size:7px;position:relative;top:-5px;margin-right:2px">INR</span>7,500.00</div><div style="position:absolute;left:395.00px;width:600px;text-align:center;top:434.30px;font-size:12.2px;line-height:12.2px;font-weight:400;color:#3b3d45;white-space:nowrap;">02/07/2023</div><div style="position:absolute;left:509.50px;width:600px;text-align:center;top:433.50px;font-size:11.6px;line-height:11.6px;font-weight:400;color:#3b3d45;white-space:nowrap;"><span style="font-size:7px;position:relative;top:-5px;margin-right:2px">INR</span>7,500.00</div><div style="position:absolute;left:624.00px;width:600px;text-align:center;top:434.30px;font-size:12px;line-height:12px;font-weight:400;color:#3b3d45;white-space:nowrap;">23</div><div style="position:absolute;left:981.4px;top:435.6px;width:7.399999999999977px;height:7.399999999999977px;background:#e53935;border-radius:50%;"></div><div style="position:absolute;left:998.50px;top:432.70px;font-size:12.2px;line-height:12.2px;font-weight:400;color:#3b3d45;white-space:nowrap;transform:scaleX(0.8858);transform-origin:0 0;">Overdue</div><div style="position:absolute;left:290px;top:507px;width:811px;height:1px;background:#d9dadf;"></div><div style="position:absolute;left:294.00px;top:477.90px;font-size:12.5px;line-height:12.5px;font-weight:400;color:#5566cc;white-space:nowrap;transform:scaleX(0.9255);transform-origin:0 0;">INVT636-45435572</div><div style="position:absolute;left:166.00px;width:600px;text-align:center;top:479.30px;font-size:12.2px;line-height:12.2px;font-weight:400;color:#3b3d45;white-space:nowrap;">01/16/2023</div><div style="position:absolute;left:280.00px;width:600px;text-align:center;top:478.50px;font-size:11.6px;line-height:11.6px;font-weight:400;color:#3b3d45;white-space:nowrap;"><span style="font-size:7px;position:relative;top:-5px;margin-right:2px">INR</span>1,000.00</div><div style="position:absolute;left:395.00px;width:600px;text-align:center;top:479.30px;font-size:12.2px;line-height:12.2px;font-weight:400;color:#3b3d45;white-space:nowrap;">02/15/2023</div><div style="position:absolute;left:509.50px;width:600px;text-align:center;top:478.50px;font-size:11.6px;line-height:11.6px;font-weight:400;color:#3b3d45;white-space:nowrap;"><span style="font-size:7px;position:relative;top:-5px;margin-right:2px">INR</span>1,000.00</div><div style="position:absolute;left:624.00px;width:600px;text-align:center;top:479.30px;font-size:12px;line-height:12px;font-weight:400;color:#3b3d45;white-space:nowrap;">15</div><div style="position:absolute;left:981.4px;top:480.6px;width:7.399999999999977px;height:7.399999999999977px;background:#e53935;border-radius:50%;"></div><div style="position:absolute;left:998.50px;top:477.70px;font-size:12.2px;line-height:12.2px;font-weight:400;color:#3b3d45;white-space:nowrap;transform:scaleX(0.8858);transform-origin:0 0;">Overdue</div><div style="position:absolute;left:290px;top:552px;width:811px;height:1px;background:#d9dadf;"></div><div style="position:absolute;left:294.00px;top:522.90px;font-size:12.5px;line-height:12.5px;font-weight:400;color:#5566cc;white-space:nowrap;transform:scaleX(0.9255);transform-origin:0 0;">INVT636-45435573</div><div style="position:absolute;left:166.00px;width:600px;text-align:center;top:524.30px;font-size:12.2px;line-height:12.2px;font-weight:400;color:#3b3d45;white-space:nowrap;">01/26/2023</div><div style="position:absolute;left:280.00px;width:600px;text-align:center;top:523.50px;font-size:11.6px;line-height:11.6px;font-weight:400;color:#3b3d45;white-space:nowrap;"><span style="font-size:7px;position:relative;top:-5px;margin-right:2px">INR</span>81,000.00</div><div style="position:absolute;left:395.00px;width:600px;text-align:center;top:524.30px;font-size:12.2px;line-height:12.2px;font-weight:400;color:#3b3d45;white-space:nowrap;">02/25/2023</div><div style="position:absolute;left:509.50px;width:600px;text-align:center;top:523.50px;font-size:11.6px;line-height:11.6px;font-weight:400;color:#3b3d45;white-space:nowrap;"><span style="font-size:7px;position:relative;top:-5px;margin-right:2px">INR</span>81,000.00</div><div style="position:absolute;left:624.00px;width:600px;text-align:center;top:524.30px;font-size:12px;line-height:12px;font-weight:400;color:#3b3d45;white-space:nowrap;">5</div><div style="position:absolute;left:981.4px;top:525.6px;width:7.399999999999977px;height:7.399999999999977px;background:#e53935;border-radius:50%;"></div><div style="position:absolute;left:998.50px;top:522.70px;font-size:12.2px;line-height:12.2px;font-weight:400;color:#3b3d45;white-space:nowrap;transform:scaleX(0.8858);transform-origin:0 0;">Overdue</div><div style="position:absolute;left:1101px;top:328px;width:5px;height:201px;background:#d2d3d6;border-radius:0 0 2px 2px;"></div><div style="position:absolute;left:290px;top:606px;width:816px;height:40px;background:#f7f7f8;"></div><div style="position:absolute;left:310.40px;top:620.00px;font-size:12px;line-height:12px;font-weight:400;color:#44464f;white-space:nowrap;transform:scaleX(0.9357);transform-origin:0 0;">Rows per page:</div><div style="position:absolute;left:395px;top:613px;width:45px;height:27px;box-sizing:border-box;background:#ededee;border:1px solid #cfd0d4;border-radius:4px;"></div><div style="position:absolute;left:403.30px;top:620.00px;font-size:12px;line-height:12px;font-weight:400;color:#44464f;white-space:nowrap;">10</div><svg style="position:absolute;left:426px;top:624px;" width="8" height="5" viewBox="0 0 8 5"><path d="M0.3 0.5h7.4L4 4.5z" fill="#2b3149"/></svg><svg style="position:absolute;left:852px;top:621px;" width="9" height="11" viewBox="0 0 9 11"><path d="M7 1.5L2.5 5.5 7 9.5" fill="none" stroke="#9d9ea4" stroke-width="1.4" stroke-linecap="round" stroke-linejoin="round"/></svg><div style="position:absolute;left:877.50px;top:620.20px;font-size:11.5px;line-height:11.5px;font-weight:400;color:#a5a6ab;white-space:nowrap;transform:scaleX(0.8991);transform-origin:0 0;">Prev</div><div style="position:absolute;left:920px;top:613px;width:47px;height:27px;box-sizing:border-box;background:#ededee;border:1px solid #cfd0d4;border-radius:4px;"></div><div style="position:absolute;left:928.00px;top:620.00px;font-size:12px;line-height:12px;font-weight:400;color:#44464f;white-space:nowrap;">1</div><svg style="position:absolute;left:953px;top:624px;" width="8" height="5" viewBox="0 0 8 5"><path d="M0.3 0.5h7.4L4 4.5z" fill="#2b3149"/></svg><div style="position:absolute;left:981.20px;top:620.00px;font-size:12px;line-height:12px;font-weight:400;color:#44464f;white-space:nowrap;transform:scaleX(0.9731);transform-origin:0 0;">of 1</div><div style="position:absolute;left:1023.20px;top:620.20px;font-size:11.5px;line-height:11.5px;font-weight:400;color:#a5a6ab;white-space:nowrap;transform:scaleX(0.9244);transform-origin:0 0;">Next</div><svg style="position:absolute;left:1062px;top:621px;" width="9" height="11" viewBox="0 0 9 11"><path d="M2 1.5L6.5 5.5 2 9.5" fill="none" stroke="#9d9ea4" stroke-width="1.4" stroke-linecap="round" stroke-linejoin="round"/></svg><div style="position:absolute;left:1116px;top:189px;width:194px;height:459px;box-sizing:border-box;background:#fff;border:1px solid #cfd1d7;border-radius:4px;overflow:hidden;box-shadow:0 1px 4px rgba(30,40,80,0.08);"></div><div style="position:absolute;left:1117px;top:642px;width:192px;height:5px;background:#cfd0d3;border-radius:3px;"></div><div style="position:absolute;left:1123.30px;top:212.50px;font-size:12.5px;line-height:12.5px;font-weight:400;color:#3d4358;white-space:nowrap;transform:scaleX(0.9392);transform-origin:0 0;">Contact details</div><div style="position:absolute;left:1207px;top:209px;width:18px;height:19px;background:#eef1fb;border-radius:4px;"></div><div style="position:absolute;left:915.80px;width:600px;text-align:center;top:213.00px;font-size:12px;line-height:12px;font-weight:400;color:#4f62d9;white-space:nowrap;">1</div><div style="position:absolute;left:1269px;top:206px;width:25px;height:25px;box-sizing:border-box;background:#eeeff3;border:1px solid #d0d2d8;border-radius:4px;box-shadow:0 1px 3px rgba(0,0,0,0.15);"></div><svg style="position:absolute;left:1275.5px;top:213px;" width="12" height="12" viewBox="0 0 12 12"><path d="M6 1.8v8.4M1.8 6h8.4" stroke="#333" stroke-width="1.15"/></svg><div style="position:absolute;left:1123px;top:245px;width:180px;height:107px;box-sizing:border-box;border:1px solid #dcdde2;border-radius:4px;"></div><div style="position:absolute;left:1133.70px;top:256.00px;font-size:11.5px;line-height:11.5px;font-weight:400;color:#3d4358;white-space:nowrap;transform:scaleX(0.9407);transform-origin:0 0;-webkit-text-stroke:0.15px #3d4358;">John Doe</div><svg style="position:absolute;left:1241px;top:256px;" width="13" height="12" viewBox="0 0 13 12"><g fill="none" stroke="#a9aab0" stroke-width="1.1"><path d="M6.6 2.6H2.3v8.2h8.2V6.6"/></g><path d="M5.6 8.2l.4-1.8 4.6-4.8 1.4 1.4-4.6 4.8z" fill="none" stroke="#a9aab0" stroke-width="1"/></svg><svg style="position:absolute;left:1279px;top:256px;" width="10" height="12" viewBox="0 0 10 12"><g fill="none" stroke="#a9aab0" stroke-width="1.1"><path d="M1.2 2.5h7.8"/><rect x="2.3" y="4.3" width="5.6" height="6" rx="0.8"/></g></svg><div style="position:absolute;left:1133.70px;top:275.50px;font-size:12.5px;line-height:12.5px;font-weight:400;color:#b0b1b6;white-space:nowrap;transform:scaleX(0.9294);transform-origin:0 0;">Primary Contact</div><svg style="position:absolute;left:1133px;top:298.4px;" width="14" height="12" viewBox="0 0 14 12"><rect x="0" y="0" width="13.5" height="11" rx="1.3" fill="#464c6a"/><path d="M2 2.8l4.75 3.2 4.75-3.2" fill="none" stroke="#fff" stroke-width="1.3" stroke-linejoin="round"/></svg><div style="position:absolute;left:1155.60px;top:299.40px;font-size:12.5px;line-height:12.5px;font-weight:400;color:#222;white-space:nowrap;transform:scaleX(0.9445);transform-origin:0 0;">maxyfidemo@gmail.com</div><svg style="position:absolute;left:1132px;top:324.5px;" width="16" height="17" viewBox="0 0 16 17"><g fill="#464c6a"><path d="M3.8 4.8C4.2 9.6 7.9 13 12.2 13.4" fill="none" stroke="#464c6a" stroke-width="2"/><rect x="1.5" y="1" width="4.4" height="6" rx="2" transform="rotate(-20 3.7 4)"/><rect x="10.3" y="10.9" width="6" height="4.4" rx="2" transform="rotate(-20 13.3 13.1)"/></g></svg><div style="position:absolute;left:1150px;top:322px;width:110px;height:24px;filter:blur(3.2px);"><div style="position:absolute;left:8px;top:5px;width:18px;height:13px;background:#cbcbce;border-radius:4px"></div><div style="position:absolute;left:35px;top:5px;width:67px;height:13px;background:#c8c8cb;border-radius:4px"></div></div>
</body></html>
